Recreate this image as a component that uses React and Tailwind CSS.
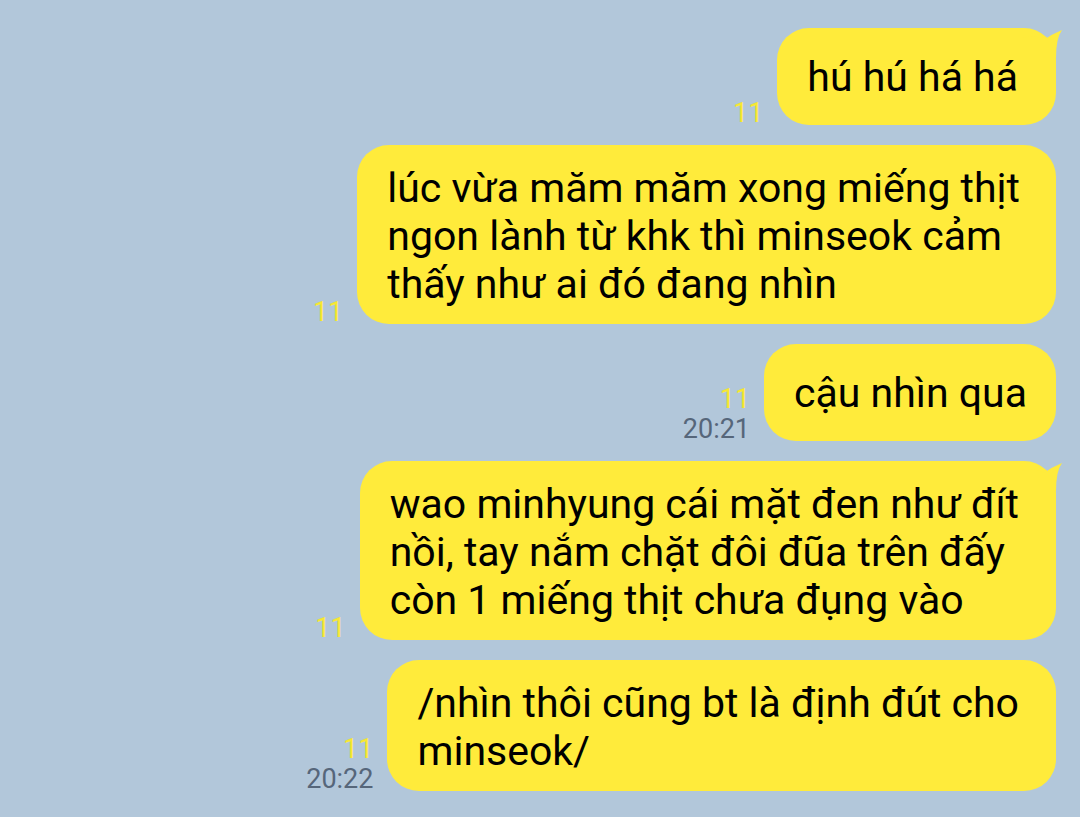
import React from "react";

const font = { fontFamily: "Roboto, 'Noto Sans', sans-serif" };

function Tail() {
  return (
    <svg
      className="absolute -right-[6px] top-0"
      width="40"
      height="30"
      viewBox="0 0 40 30"
    >
      <path d="M0 10 Q14 6 22 12 Q30 6 40 2 Q34 10 34 30 L0 30 Z" fill="#ffeb3b" />
    </svg>
  );
}

function Msg({ lines, time, tail, pr }) {
  const single = lines.length === 1;
  return (
    <div className="flex justify-end items-end">
      <div className="flex flex-col items-end mr-[14px] -mb-[3px]">
        <span className="text-[27px] leading-[30px] text-[#f7e733]">11</span>
        {time && (
          <span className="text-[27px] leading-[30px] text-[#56667a]">{time}</span>
        )}
      </div>
      <div
        className={`relative bg-[#ffeb3b] rounded-[32px] text-black text-[41px] leading-[48px] pl-[30px] ${pr} ${
          single ? "min-h-[97px] flex items-center" : "pt-[19px] pb-[16px]"
        }`}
      >
        {tail && <Tail />}
        <div className="relative">
          {lines.map((l, i) => (
            <div key={i} className="whitespace-nowrap">
              {l}
            </div>
          ))}
        </div>
      </div>
    </div>
  );
}

export default function App() {
  return (
    <div
      className="w-[1080px] h-[817px] bg-[#b2c7da] overflow-hidden pt-[28px] pr-[24px] flex flex-col gap-[20px]"
      style={font}
    >
      <Msg lines={["hú hú há há"]} tail pr="pr-[38px]" />
      <Msg
        lines={[
          "lúc vừa măm măm xong miếng thịt",
          "ngon lành từ khk thì minseok cảm",
          "thấy như ai đó đang nhìn",
        ]}
        pr="pr-[36px]"
      />
      <Msg lines={["cậu nhìn qua"]} time="20:21" pr="pr-[29px]" />
      <Msg
        lines={[
          "wao minhyung cái mặt đen như đít",
          "nồi, tay nắm chặt đôi đũa trên đấy",
          "còn 1 miếng thịt chưa đụng vào",
        ]}
        tail
        pr="pr-[37px]"
      />
      <Msg
        lines={["/nhìn thôi cũng bt là định đút cho", "minseok/"]}
        time="20:22"
        pr="pr-[37px]"
      />
    </div>
  );
}
